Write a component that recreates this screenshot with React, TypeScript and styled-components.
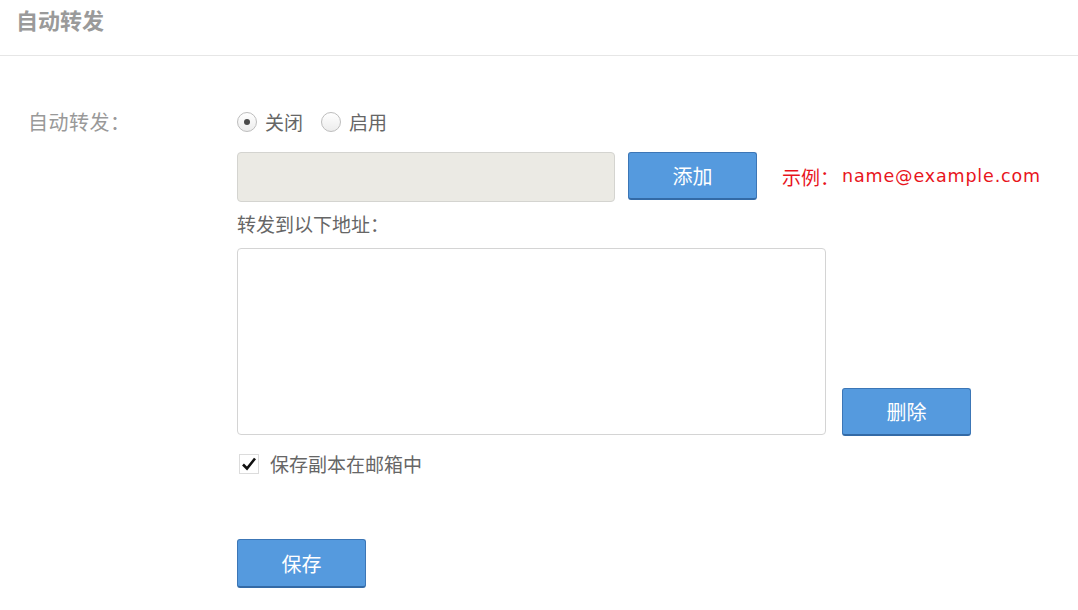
import styled, { createGlobalStyle } from "styled-components";

const GlobalStyle = createGlobalStyle`
  html, body {
    margin: 0;
    padding: 0;
    background: #ffffff;
  }
  body {
    font-family: "Noto Sans CJK SC", "DejaVu Sans", sans-serif;
    color: #666;
  }
`;

const Page = styled.div`
  width: 1078px;
  min-height: 610px;
  background: #fff;
`;

const Header = styled.div`
  height: 56px;
  box-sizing: border-box;
  padding: 3px 0 0 16px;
  border-bottom: 1px solid #e6e6e6;
`;

const Title = styled.h1`
  margin: 0;
  font-size: 22px;
  font-weight: 700;
  line-height: 32px;
  color: #9a9a9a;
`;

const Form = styled.div`
  display: grid;
  grid-template-columns: 209px 1fr;
  padding: 55px 0 0 28px;
`;

const Label = styled.div`
  font-size: 20px;
  line-height: 22px;
  letter-spacing: 0.5px;
  color: #999;
`;

const Content = styled.div`
  display: flex;
  flex-direction: column;
`;

const RadioRow = styled.div`
  display: flex;
  align-items: center;
  gap: 18px;
  height: 22px;
`;

const RadioOption = styled.label`
  display: flex;
  align-items: center;
  gap: 8px;
  font-size: 19px;
  line-height: 22px;
  color: #666;
`;

const RadioDot = styled.span<{ $checked?: boolean }>`
  width: 20px;
  height: 20px;
  box-sizing: border-box;
  border-radius: 50%;
  border: 1px solid #bdbdbd;
  background: linear-gradient(#ffffff, #ececec);
  display: flex;
  align-items: center;
  justify-content: center;
  &::after {
    content: "";
    width: 6px;
    height: 6px;
    border-radius: 50%;
    background: ${(p) => (p.$checked ? "#4a4a4a" : "transparent")};
  }
`;

const InputRow = styled.div`
  display: flex;
  align-items: flex-start;
  margin-top: 19px;
`;

const TextInput = styled.div`
  width: 378px;
  height: 50px;
  box-sizing: border-box;
  background: #ebeae4;
  border: 1px solid #d4d4d0;
  border-radius: 4px;
`;

const Button = styled.button`
  width: 129px;
  height: 48px;
  box-sizing: border-box;
  background: #559ade;
  border: 1px solid #3c76b6;
  border-bottom: 2px solid #336aa6;
  border-radius: 3px;
  color: #fff;
  font-family: "Noto Sans CJK SC", sans-serif;
  font-size: 20px;
  padding: 0;
  cursor: pointer;
`;

const AddButton = styled(Button)`
  margin-left: 13px;
`;

const Example = styled.div`
  margin-left: 25px;
  height: 48px;
  display: flex;
  align-items: center;
  color: #e8141c;
  font-size: 19px;
`;

const ExampleMail = styled.span`
  margin-left: 3px;
  font-family: "DejaVu Sans", sans-serif;
  font-size: 17.5px;
  letter-spacing: 0.85px;
`;

const Caption = styled.div`
  margin-top: 9px;
  font-size: 19px;
  line-height: 26px;
  color: #666;
`;

const ListRow = styled.div`
  display: flex;
  align-items: flex-end;
  margin-top: 11px;
`;

const AddressList = styled.div`
  width: 589px;
  height: 187px;
  box-sizing: border-box;
  border: 1px solid #d4d4d4;
  border-radius: 4px;
  background: #fff;
`;

const DeleteButton = styled(Button)`
  margin-left: 16px;
  margin-bottom: -1px;
`;

const CheckRow = styled.label`
  display: flex;
  align-items: center;
  gap: 11px;
  margin-top: 17px;
  margin-left: 2px;
  font-size: 19px;
  line-height: 24px;
  color: #666;
`;

const CheckBox = styled.span`
  width: 20px;
  height: 20px;
  box-sizing: border-box;
  border: 1px solid #dcdcdc;
  background: #fff;
  display: flex;
  align-items: center;
  justify-content: center;
`;

const SaveButton = styled(Button)`
  margin-top: 63px;
  height: 49px;
`;

export default function App() {
  return (
    <Page>
      <GlobalStyle />
      <Header>
        <Title>自动转发</Title>
      </Header>
      <Form>
        <Label>自动转发：</Label>
        <Content>
          <RadioRow>
            <RadioOption>
              <RadioDot $checked />
              关闭
            </RadioOption>
            <RadioOption>
              <RadioDot />
              启用
            </RadioOption>
          </RadioRow>
          <InputRow>
            <TextInput />
            <AddButton>添加</AddButton>
            <Example>
              示例：<ExampleMail>name@example.com</ExampleMail>
            </Example>
          </InputRow>
          <Caption>转发到以下地址：</Caption>
          <ListRow>
            <AddressList />
            <DeleteButton>删除</DeleteButton>
          </ListRow>
          <CheckRow>
            <CheckBox>
              <svg width="16" height="14" viewBox="0 0 16 14">
                <path d="M2 7.5 L6 11.5 L14 1.5" fill="none" stroke="#111" strokeWidth="2.6" />
              </svg>
            </CheckBox>
            保存副本在邮箱中
          </CheckRow>
          <div>
            <SaveButton>保存</SaveButton>
          </div>
        </Content>
      </Form>
    </Page>
  );
}
